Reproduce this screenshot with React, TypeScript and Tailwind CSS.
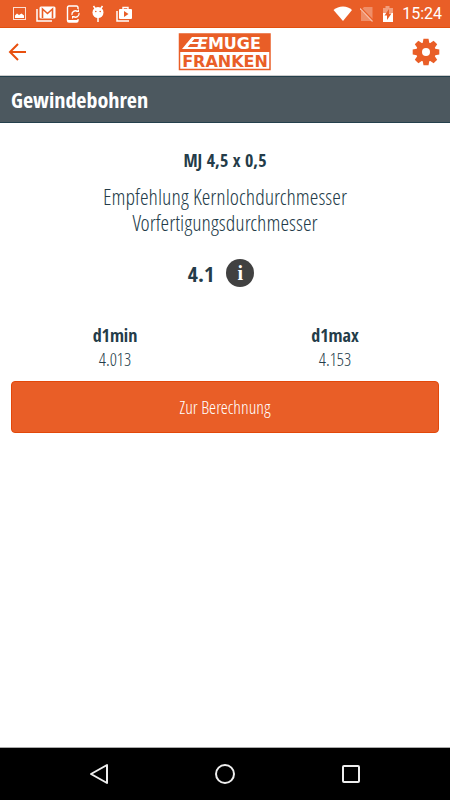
import { ReactNode } from "react";

const condensed = "font-['Open_Sans_Condensed','Open_Sans',sans-serif]";
const light = "font-['Open_Sans_Condensed_Light','Open_Sans_Condensed',sans-serif] font-light";

function Icon({ w, h, children }: { w: number; h: number; children: ReactNode }) {
  return (
    <svg width={w} height={h} viewBox={`0 0 ${w} ${h}`} fill="none" aria-hidden="true">
      {children}
    </svg>
  );
}

function StatusBar() {
  return (
    <div className="flex h-7 items-center justify-between border-b border-[#e2500f] bg-[#e95e27] pr-2 pl-3 text-white">
      <div className="flex items-center gap-2.5">
        {/* picture */}
        <Icon w={14} h={14}>
          <rect x="1.5" y="0.5" width="12" height="12" stroke="#fff" strokeOpacity=".8" />
          <path d="M3 11V8.500l2-2 2 1.500 2.500-1.500L12 8.500V11z" fill="#fff" />
        </Icon>
        {/* mail */}
        <Icon w={20} h={16}>
          <path d="M1 3v12h15" stroke="#fff" strokeWidth="1.5" />
          <rect x="3.5" y="0.5" width="16" height="12" rx="1.5" fill="#fff" />
          <path d="M6.5 12V3l5 4.5 5-4.5v9" stroke="#e95e27" strokeWidth="1.6" />
        </Icon>
        {/* phone sync */}
        <Icon w={15} h={18}>
          <path
            d="M12 4V2.500Q12 1 10.500 1H3Q1.500 1 1.500 2.500v13Q1.500 17 3 17h7.500q1.500 0 1.500-1.500V14"
            stroke="#fff"
            strokeWidth="1.4"
          />
          <path d="M2 15h10v2H2z" fill="#fff" />
          <path
            d="M6 10a3.500 3.500 0 0 1 5.500-3.500M13 8a3.500 3.500 0 0 1-5.500 3.500"
            stroke="#fff"
            strokeWidth="1.3"
          />
          <path d="M10 7h3V4zM9 11H6v3z" fill="#fff" />
        </Icon>
        {/* lollipop robot */}
        <Icon w={14} h={18}>
          <path d="M2.500 1l2 3M11.500 1l-2 3M7 11v6" stroke="#fff" strokeWidth="1.5" />
          <circle cx="7" cy="7.500" r="5.500" fill="#fff" />
          <circle cx="4.800" cy="6.500" r=".8" fill="#e95e27" />
          <circle cx="9.200" cy="6.500" r=".8" fill="#e95e27" />
        </Icon>
        {/* play store */}
        <Icon w={18} h={16}>
          <path d="M2 5v10h12" stroke="#fff" strokeWidth="1.5" />
          <path d="M8 4V1.500h5V4" stroke="#fff" strokeWidth="1.4" />
          <rect x="4" y="3" width="13" height="10" rx="1" fill="#fff" />
          <path d="M9 5v6l4.500-3z" fill="#e95e27" />
        </Icon>
      </div>
      <div className="flex items-center gap-2">
        {/* wifi */}
        <Icon w={20} h={16}>
          <path d="M11 15L1.500 4Q5.500.5 11 .5T20 4z" fill="#fff" />
        </Icon>
        {/* no sim */}
        <Icon w={14} h={16}>
          <path d="M4 1h8.500v14H1V4z" fill="#fff" fillOpacity=".3" />
          <path d="M0 1.500l13.500 14" stroke="#e95e27" strokeWidth="2.4" />
          <path d="M0 2.500l12.500 13" stroke="#fff" strokeOpacity=".6" strokeWidth="1.2" />
        </Icon>
        {/* battery */}
        <Icon w={12} h={18}>
          <path d="M1 3h2.500V1h4v2H11v5H1z" fill="#fff" fillOpacity=".4" />
          <path d="M1 8h10v9H1z" fill="#fff" />
          <path d="M7 4L2.500 10.500H5V15l4.500-6.500H7z" fill="#e95e27" />
        </Icon>
        <span className="font-['Roboto',sans-serif] text-base">15:24</span>
      </div>
    </div>
  );
}

function Logo() {
  return (
    <svg width="94" height="38" viewBox="0 0 94 38" role="img" aria-label="Emuge Franken">
      <rect x="2.500" y="1" width="90.500" height="35.500" fill="#fff" stroke="#e95e27" strokeWidth="1.5" />
      <path d="M2 1h91v18H2z" fill="#e95e27" />
      {/* tapered bars running into the first letter */}
      <path d="M15 4h9v2H14zM11 9h12v2H9zM7 14h15v2H5zM15 4h4L9 16H5z" fill="#fff" />
      <text x="20" y="16" fill="#fff" fontFamily="DejaVu Sans" fontWeight="700" fontSize="16">
        <tspan fontStyle="italic">E</tspan>MUGE
      </text>
      <text
        x="48"
        y="34"
        textAnchor="middle"
        fill="#e95e27"
        fontFamily="DejaVu Sans"
        fontWeight="700"
        fontSize="16"
      >
        FRANKEN
      </text>
    </svg>
  );
}

function Gear() {
  return (
    <svg width="28" height="28" viewBox="-14 -14 28 28" fill="#e95e27" aria-hidden="true">
      {[0, 45, 90, 135, 180, 225, 270, 315].map((a) => (
        <path key={a} d="M-3.500 -8L-2.500 -13.300h5L3.500 -8z" transform={`rotate(${a})`} />
      ))}
      <circle r="9.800" />
      <circle r="4" fill="#fff" />
    </svg>
  );
}

function Value({ label, value }: { label: string; value: string }) {
  return (
    <div>
      <dt className="font-bold">{label}</dt>
      <dd className={light}>{value}</dd>
    </div>
  );
}

export default function App() {
  return (
    <div className={`flex min-h-screen flex-col bg-white text-[#243c49] ${condensed}`}>
      <StatusBar />
      <header className="grid h-12 grid-cols-[1fr_auto_1fr] items-center border-b border-[#cccccc] pr-2.5 pl-2">
        <button aria-label="Zurück" className="justify-self-start">
          <Icon w={20} h={20}>
            <path d="M18 10H2M10 2l-8 8 8 8" stroke="#e8500f" strokeWidth="2" />
          </Icon>
        </button>
        <Logo />
        <button aria-label="Einstellungen" className="justify-self-end">
          <Gear />
        </button>
      </header>
      <h1 className="flex h-[47px] items-center border-y border-[#24404c] bg-[#4c585f] px-[11px] text-[22px] font-bold text-white">
        Gewindebohren
      </h1>

      <main className="flex-1 px-[11px] pt-[23px] text-center">
        <h2 className="text-lg leading-7 font-bold">MJ 4,5 x 0,5</h2>
        <p className={`mt-[9px] text-[22px] leading-[26px] ${light}`}>
          Empfehlung Kernlochdurchmesser
          <br />
          Vorfertigungsdurchmesser
        </p>
        <div className="mt-6 flex items-center justify-center gap-3 pr-2">
          <strong className="text-[22px] leading-7">4.1</strong>
          <button
            aria-label="Info"
            className="size-7 rounded-full bg-[#414141] font-['Liberation_Serif',serif] text-xl leading-7 font-bold text-white"
          >
            i
          </button>
        </div>
        <dl className="-mx-1.5 mt-9 grid grid-cols-2 text-lg leading-6">
          <Value label="d1min" value="4.013" />
          <Value label="d1max" value="4.153" />
        </dl>
        <button
          className={`mt-[10px] h-[52px] w-full rounded border border-[#e2480a] bg-[#e95e27] text-lg text-white ${light}`}
        >
          Zur Berechnung
        </button>
      </main>

      <nav className="flex h-[53px] items-center justify-around border-t border-[#aaaaaa] bg-black px-9">
        <button aria-label="Zurück">
          <Icon w={20} h={22}>
            <path d="M18 2v18L2 11z" stroke="#eee" strokeWidth="2" strokeLinejoin="round" />
          </Icon>
        </button>
        <button aria-label="Startseite">
          <Icon w={22} h={22}>
            <circle cx="11" cy="11" r="9" stroke="#eee" strokeWidth="2" />
          </Icon>
        </button>
        <button aria-label="Übersicht">
          <Icon w={20} h={20}>
            <rect x="2" y="2" width="16" height="16" rx="1" stroke="#eee" strokeWidth="2" />
          </Icon>
        </button>
      </nav>
    </div>
  );
}
